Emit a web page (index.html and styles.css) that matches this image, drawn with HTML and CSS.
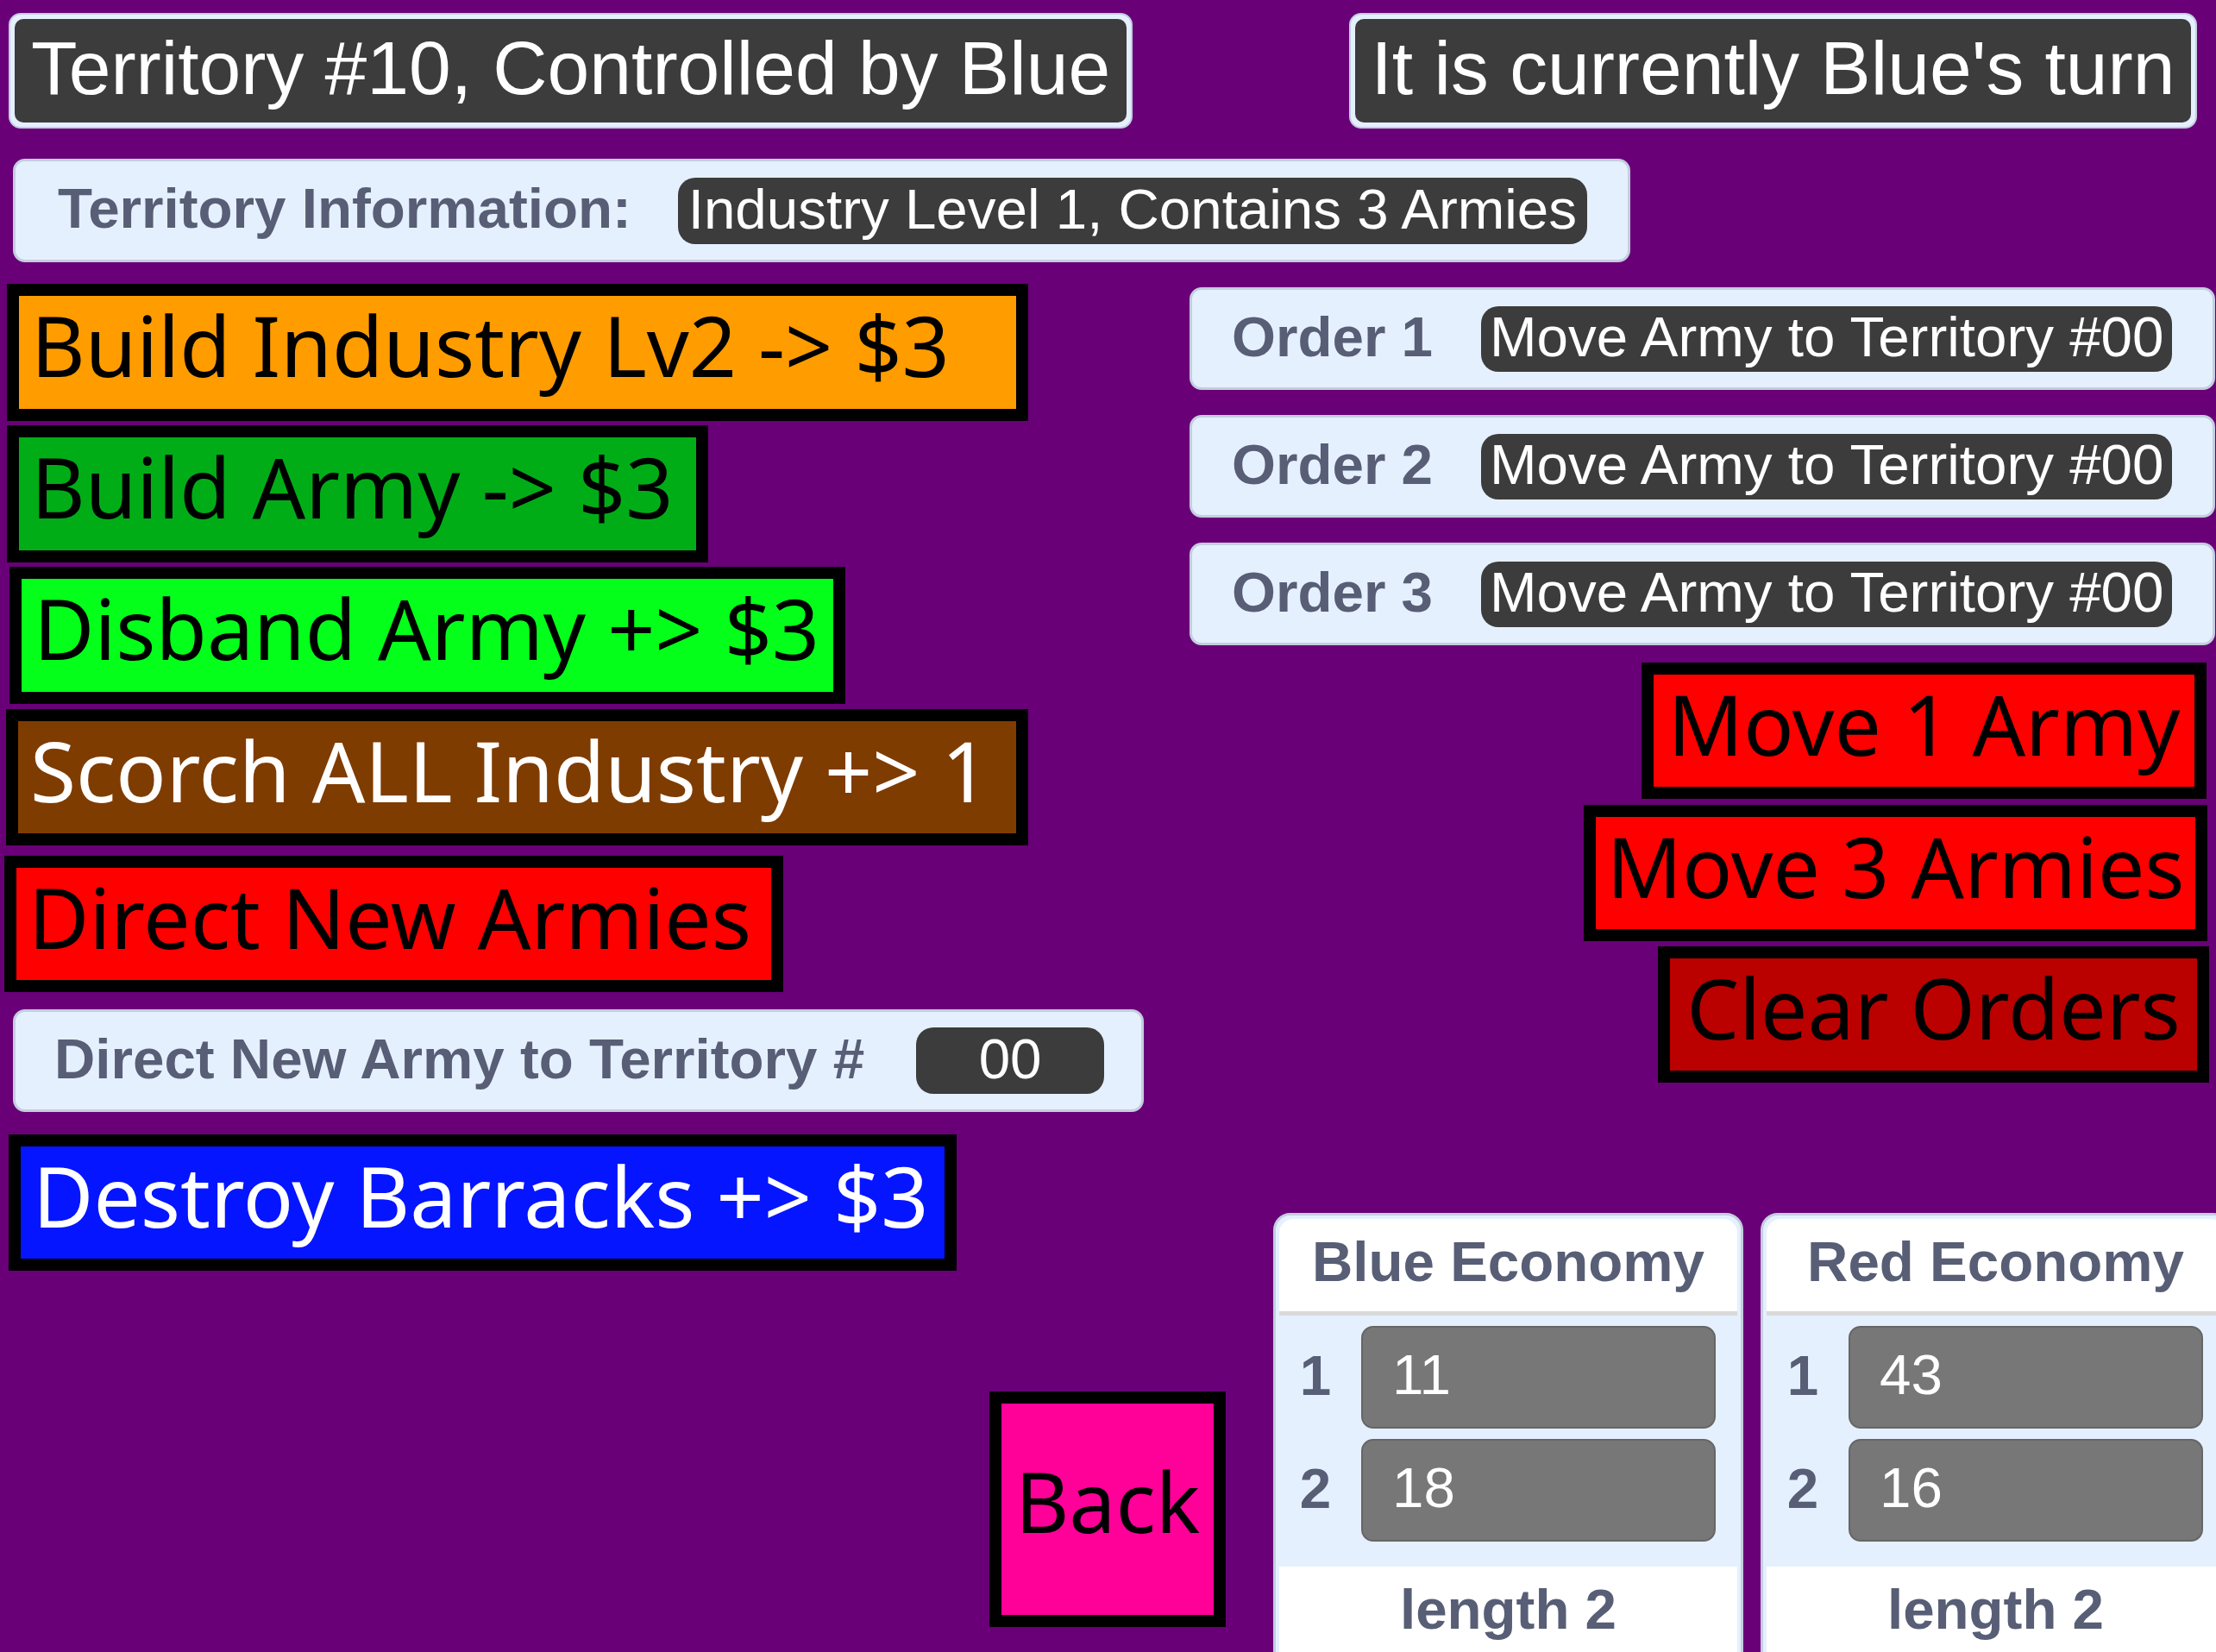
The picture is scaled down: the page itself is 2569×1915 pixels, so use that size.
FILE: index.html
```html
<!DOCTYPE html>
<html lang="en">
<head>
<meta charset="utf-8">
<title>Territory #10</title>
<link rel="stylesheet" href="styles.css">
</head>
<body>
<div class="page">
  <div class="top-row">
    <div class="readout readout-territory"><div class="readout-value">Territory #10, Controlled by Blue</div></div>
    <div class="readout readout-turn"><div class="readout-value">It is currently Blue's turn</div></div>
  </div>

  <div class="monitor monitor-info">
    <span class="monitor-label">Territory Information:</span>
    <span class="monitor-value">Industry Level 1, Contains 3 Armies</span>
  </div>

  <div class="main">
    <div class="col-left">
      <div class="btn btn-industry">Build Industry Lv2 -&gt; $3</div>
      <div class="btn btn-army">Build Army -&gt; $3</div>
      <div class="btn btn-disband">Disband Army +&gt; $3</div>
      <div class="btn btn-scorch">Scorch ALL Industry +&gt; 1</div>
      <div class="btn btn-direct">Direct New Armies</div>
      <div class="monitor monitor-direct">
        <span class="monitor-label">Direct New Army to Territory #</span>
        <span class="monitor-value value-short">00</span>
      </div>
      <div class="btn btn-destroy">Destroy Barracks +&gt; $3</div>
      <div class="btn btn-back">Back</div>
    </div>

    <div class="col-right">
      <div class="monitor monitor-order">
        <span class="monitor-label">Order 1</span>
        <span class="monitor-value">Move Army to Territory #00</span>
      </div>
      <div class="monitor monitor-order">
        <span class="monitor-label">Order 2</span>
        <span class="monitor-value">Move Army to Territory #00</span>
      </div>
      <div class="monitor monitor-order">
        <span class="monitor-label">Order 3</span>
        <span class="monitor-value">Move Army to Territory #00</span>
      </div>
      <div class="btn btn-center btn-move1">Move 1 Army</div>
      <div class="btn btn-center btn-move3">Move 3 Armies</div>
      <div class="btn btn-center btn-clear">Clear Orders</div>

      <div class="lists">
        <div class="list">
          <div class="list-header">Blue Economy</div>
          <div class="list-body">
            <div class="list-row"><span class="list-index">1</span><span class="list-item">11</span></div>
            <div class="list-row"><span class="list-index">2</span><span class="list-item">18</span></div>
          </div>
          <div class="list-footer">length 2</div>
        </div>
        <div class="list">
          <div class="list-header">Red Economy</div>
          <div class="list-body">
            <div class="list-row"><span class="list-index">1</span><span class="list-item">43</span></div>
            <div class="list-row"><span class="list-index">2</span><span class="list-item">16</span></div>
          </div>
          <div class="list-footer">length 2</div>
        </div>
      </div>
    </div>
  </div>
</div>
</body>
</html>
```

FILE: styles.css
```css
html, body {
  margin: 0;
  padding: 0;
}

body {
  background: #690078;
  width: 2569px;
  height: 1915px;
  overflow: hidden;
  font-family: "Liberation Sans", Arial, sans-serif;
}

.page {
  width: 2569px;
  height: 1915px;
  overflow: hidden;
}

/* ---------- top readouts ---------- */
.top-row {
  display: flex;
  padding-top: 15px;
}

.readout {
  box-sizing: border-box;
  height: 134px;
  border: 2px solid #c4cede;
  background: #e5f0ff;
  border-radius: 14px;
  padding: 5px;
  flex: none;
}

.readout-value {
  height: 120px;
  background: #3c3c3c;
  border-radius: 10px;
  color: #ffffff;
  font-family: "Liberation Sans", Arial, sans-serif;
  font-size: 87.6px;
  line-height: 114px;
  text-align: center;
  white-space: nowrap;
}

.readout-territory {
  margin-left: 10px;
  width: 1303px;
}

.readout-turn {
  margin-left: 251px;
  width: 983px;
}

/* ---------- variable monitors ---------- */
.monitor {
  box-sizing: border-box;
  display: flex;
  align-items: center;
  background: #e5f0ff;
  border: 3px solid #c4cede;
  border-radius: 14px;
  font-family: "Liberation Sans", Arial, sans-serif;
  font-size: 65.5px;
  flex: none;
}

.monitor-label {
  font-weight: bold;
  color: #575e75;
  white-space: nowrap;
  line-height: 72px;
  padding-bottom: 4px;
}

.monitor-value {
  box-sizing: border-box;
  background: #3c3c3c;
  color: #ffffff;
  border-radius: 20px;
  height: 77px;
  line-height: 73px;
  padding: 0 12px;
  white-space: nowrap;
}

.value-short {
  width: 218px;
  text-align: center;
}

.monitor-info {
  margin: 35px 0 0 15px;
  height: 120px;
  padding: 0 47px 0 49px;
  gap: 54px;
  width: max-content;
}

.monitor-direct {
  margin-top: 20px;
  margin-left: 15px;
  height: 119px;
  width: 1311px;
  padding: 0 43px 0 45px;
  gap: 60px;
}

.monitor-order {
  margin-left: 9px;
  height: 119px;
  width: 1189px;
  padding: 0 44px 0 46px;
  gap: 56px;
}

.monitor-order + .monitor-order {
  margin-top: 29px;
}

.monitor-order .monitor-value {
  height: 76px;
  line-height: 72px;
  padding: 0 10px;
}

/* ---------- layout columns ---------- */
.main {
  display: flex;
}

.col-left {
  width: 1370px;
  flex: none;
  display: flex;
  flex-direction: column;
  align-items: flex-start;
  padding-top: 25px;
}

.col-right {
  width: 1199px;
  flex: none;
  display: flex;
  flex-direction: column;
  align-items: flex-start;
  padding-top: 29px;
}

/* ---------- sprite buttons ---------- */
.btn {
  box-sizing: border-box;
  height: 159px;
  border: 14px solid #000000;
  font-family: "Noto Sans", "Open Sans", sans-serif;
  font-size: 96.5px;
  line-height: 113px;
  padding-left: 14px;
  white-space: nowrap;
  color: #000000;
  flex: none;
}

.btn-center {
  padding-left: 0;
  text-align: center;
  align-self: flex-end;
  height: 158px;
  background: #ff0000;
}

.btn-industry {
  margin-left: 8px;
  width: 1184px;
  background: #ff9c00;
}

.btn-army {
  margin-top: 5px;
  margin-left: 8px;
  width: 813px;
  background: #01ad17;
}

.btn-disband {
  margin-top: 5px;
  margin-left: 11px;
  width: 969px;
  background: #04ff1a;
}

.btn-scorch {
  margin-top: 6px;
  margin-left: 7px;
  width: 1185px;
  height: 158px;
  background: #7f3c00;
  color: #ffffff;
}

.btn-direct {
  margin-top: 12px;
  margin-left: 5px;
  width: 903px;
  height: 158px;
  background: #ff0000;
}

.btn-destroy {
  margin-top: 26px;
  margin-left: 10px;
  width: 1099px;
  height: 158px;
  background: #0515ff;
  color: #ffffff;
}

.btn-back {
  margin-top: 140px;
  margin-left: 1147px;
  width: 274px;
  height: 273px;
  padding-left: 0;
  text-align: center;
  line-height: 225px;
  background: #ff0099;
}

.btn-move1 {
  margin-top: 20px;
  margin-right: 11px;
  width: 655px;
}

.btn-move3 {
  margin-top: 7px;
  margin-right: 10px;
  width: 723px;
}

.btn-clear {
  margin-top: 6px;
  margin-right: 8px;
  width: 639px;
  background: #bb0000;
}

/* ---------- list monitors ---------- */
.lists {
  display: flex;
  gap: 20px;
  margin-top: 151px;
  margin-left: 106px;
  flex: none;
}

.list {
  box-sizing: border-box;
  width: 545px;
  height: 560px;
  flex: none;
  border: 3px solid #c4cede;
  border-radius: 20px;
  background: #e5f0ff;
  padding: 4px 4px 0;
  font-family: "Liberation Sans", Arial, sans-serif;
  font-size: 65.5px;
}

.list-header {
  box-sizing: border-box;
  height: 112px;
  background: #ffffff;
  border-bottom: 5px solid #d9d9d9;
  border-radius: 16px 16px 0 0;
  text-align: center;
  font-weight: bold;
  color: #575e75;
  line-height: 99px;
  white-space: nowrap;
}

.list-body {
  display: flex;
  flex-direction: column;
  gap: 12px;
  padding: 12px 25px 29px 12px;
}

.list-row {
  display: flex;
  align-items: center;
}

.list-index {
  width: 60px;
  margin-right: 23px;
  text-align: center;
  font-weight: bold;
  color: #575e75;
  flex: none;
  line-height: 72px;
  padding-bottom: 4px;
}

.list-item {
  box-sizing: border-box;
  flex: 1;
  height: 119px;
  background: #777777;
  border: 2px solid #666666;
  border-radius: 14px;
  color: #ffffff;
  line-height: 109px;
  padding-left: 34px;
}

.list-footer {
  height: 100px;
  background: #ffffff;
  text-align: center;
  font-weight: bold;
  color: #575e75;
  line-height: 99px;
}
```
